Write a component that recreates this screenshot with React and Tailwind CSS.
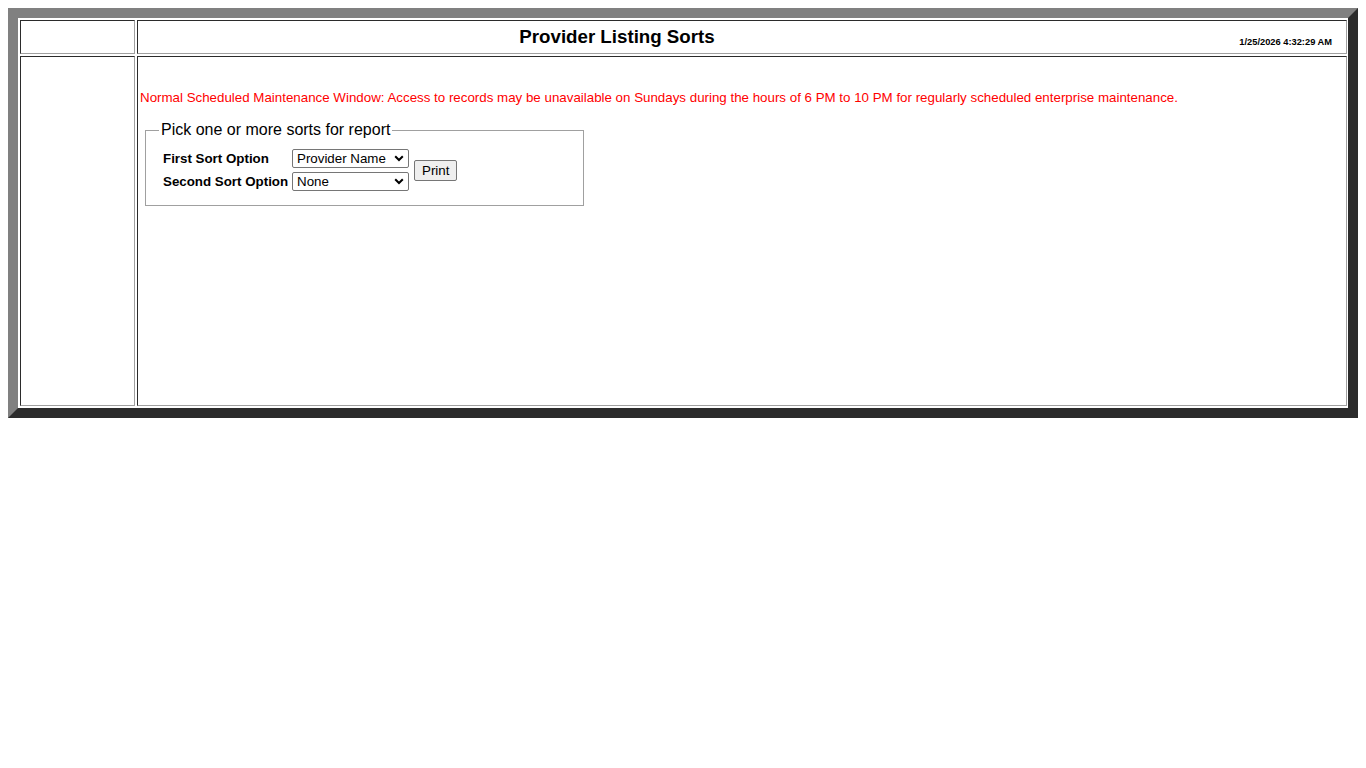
import React from "react";

function Chevron() {
  return (
    <svg width="10" height="7" viewBox="0 0 10 7" className="pointer-events-none absolute right-[5px] top-[6px]">
      <path d="M1.2 1.2 L5 5 L8.8 1.2" fill="none" stroke="#000" strokeWidth="2" />
    </svg>
  );
}

function FakeSelect({ value }) {
  return (
    <div className="relative w-[117px] h-[19px]">
      <select
        defaultValue={value}
        className="block appearance-none w-full h-full border border-[#767676] rounded-[2px] bg-white text-[13.33px] leading-[17px] pl-[4px] pr-[16px] text-black"
      >
        <option>{value}</option>
        <option>Provider Name</option>
        <option>None</option>
      </select>
      <Chevron />
    </div>
  );
}

export default function App() {
  return (
    <div className="bg-white min-h-[768px] pt-[8px] pl-[8px]" style={{ fontFamily: '"Liberation Sans", Arial, sans-serif' }}>
      <div className="w-[1350px] h-[410px] border-[10px] border-t-[#808080] border-l-[#808080] border-b-[#2b2b2b] border-r-[#2b2b2b] bg-white pt-[2px] pl-[2px] pr-[1px] pb-[2px]">
        <div className="grid grid-cols-[115px_1fr] grid-rows-[34px_350px] gap-[2px]">
          <div className="border border-t-[#2b2b2b] border-l-[#2b2b2b] border-b-[#a0a0a0] border-r-[#a0a0a0]" />
          <div className="border border-t-[#2b2b2b] border-l-[#2b2b2b] border-b-[#a0a0a0] border-r-[#a0a0a0] flex">
            <div className="w-[958px] pt-[5px] text-center font-bold text-[18.72px] leading-[22px] text-black">
              Provider Listing Sorts
            </div>
            <div className="flex-1 self-end text-right pr-[14px] pb-[5px] font-bold text-[9.3px] leading-[11px] text-black">
              1/25/2026 4:32:29 AM
            </div>
          </div>
          <div className="border border-t-[#2b2b2b] border-l-[#2b2b2b] border-b-[#a0a0a0] border-r-[#a0a0a0]" />
          <div className="border border-t-[#2b2b2b] border-l-[#2b2b2b] border-b-[#a0a0a0] border-r-[#a0a0a0] pl-[2px] pt-[33px]">
            <div className="text-[13.33px] leading-[15px] text-[#ff0000]">
              Normal Scheduled Maintenance Window: Access to records may be unavailable on Sundays during the hours of 6 PM to 10 PM for regularly scheduled enterprise maintenance.
            </div>
            <fieldset className="mt-[16px] ml-[5px] w-[439px] h-[85px] border border-[#a0a0a0] pl-[13px] pt-[1px]">
              <legend className="px-[2px] text-[16px] leading-[18px] text-black">Pick one or more sorts for report</legend>
              <div className="flex items-center gap-[5px] pl-[4px] pt-[9px]">
                <div className="flex flex-col gap-[4px]">
                  <div className="flex items-center h-[19px]">
                    <div className="w-[129px] font-bold text-[13.33px] leading-[15px] text-black">First Sort Option</div>
                    <FakeSelect value="Provider Name" />
                  </div>
                  <div className="flex items-center h-[19px]">
                    <div className="w-[129px] font-bold text-[13.33px] leading-[15px] text-black">Second Sort Option</div>
                    <FakeSelect value="None" />
                  </div>
                </div>
                <button className="h-[21px] px-[7px] border border-[#767676] rounded-[2px] bg-[#efefef] text-[13.33px] leading-[17px] text-black">
                  Print
                </button>
              </div>
            </fieldset>
          </div>
        </div>
      </div>
    </div>
  );
}
